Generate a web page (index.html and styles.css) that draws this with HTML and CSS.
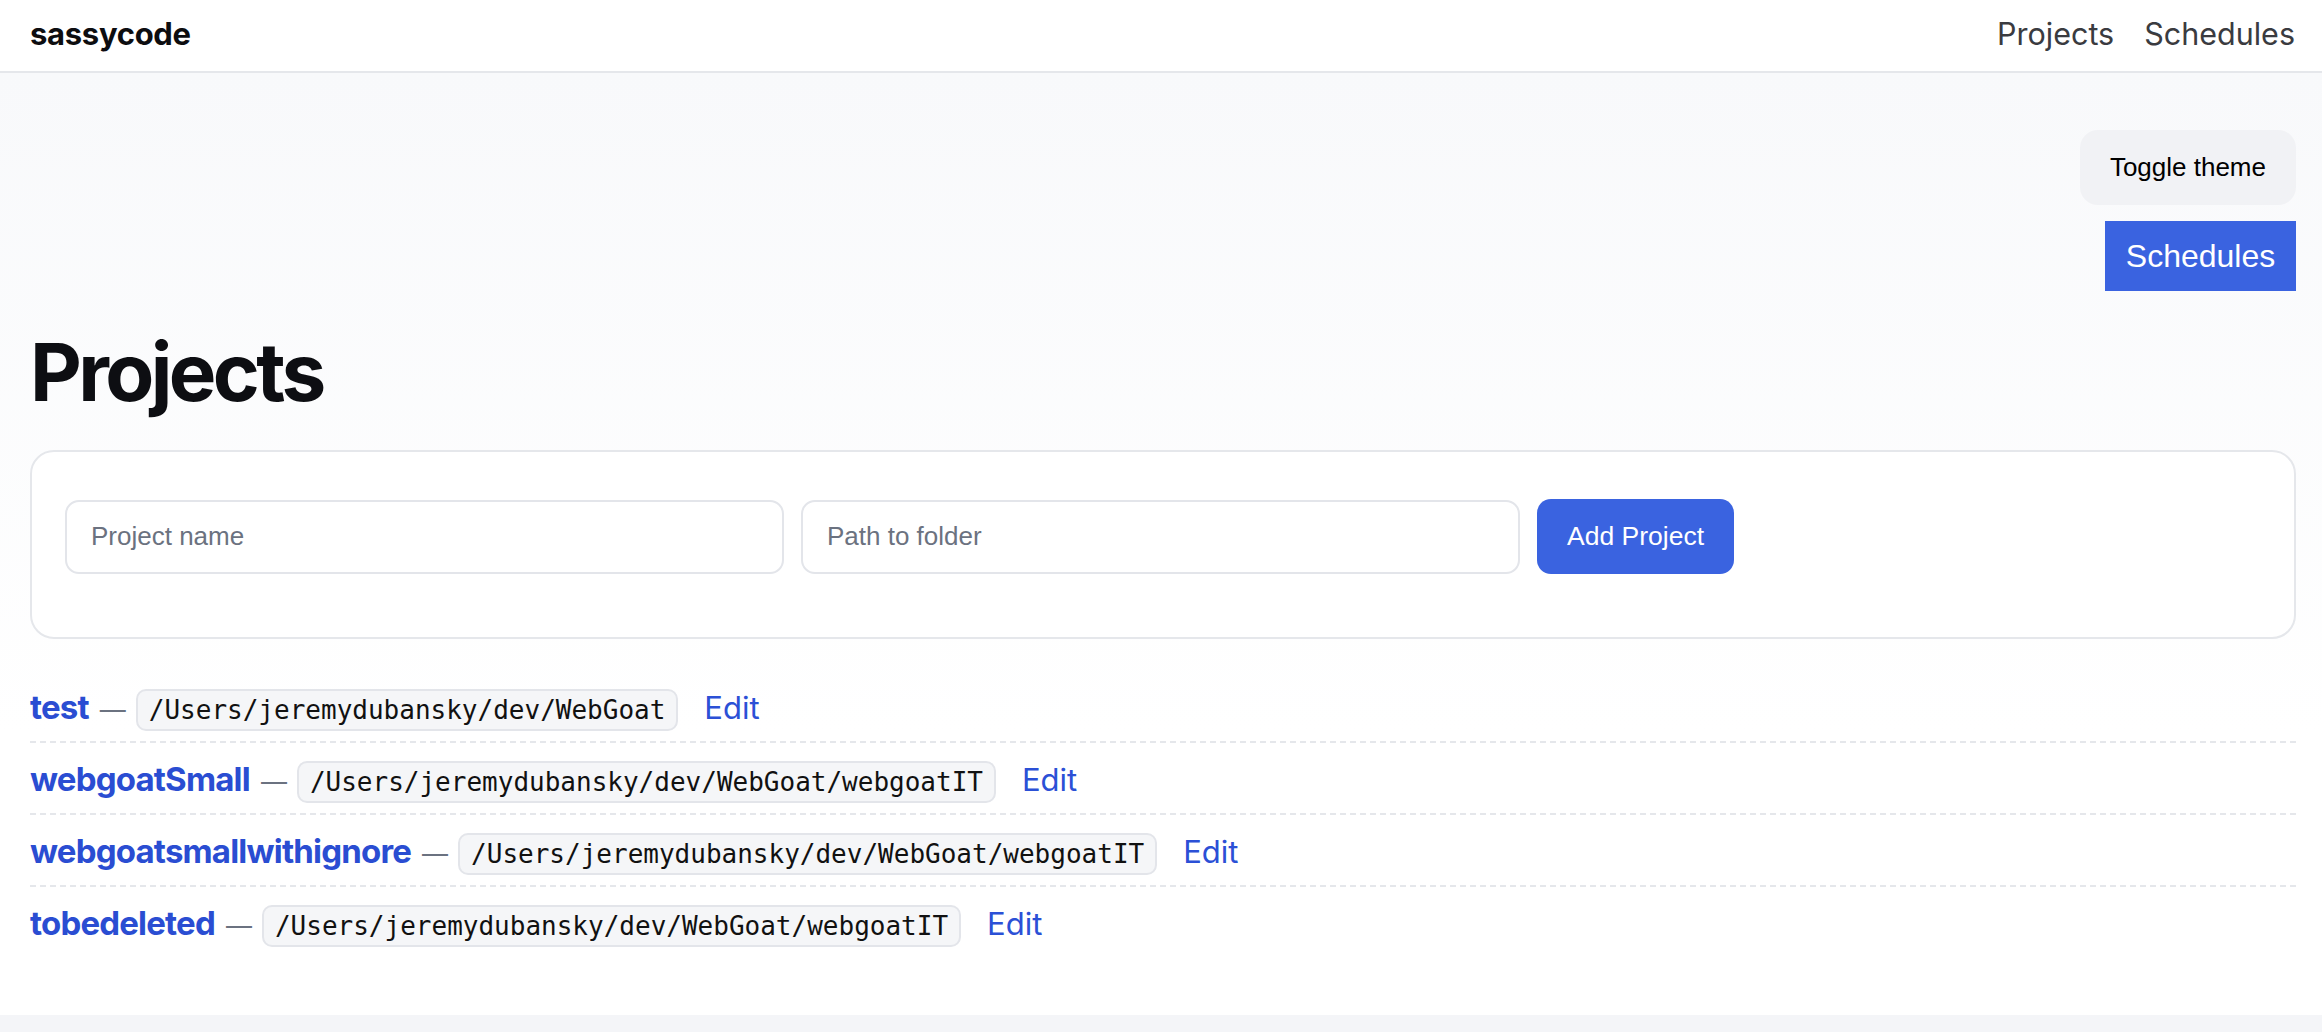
FILE: index.html
```html
<!DOCTYPE html>
<html lang="en">
<head>
<meta charset="utf-8">
<title>sassycode — Projects</title>
<link rel="stylesheet" href="styles.css">
</head>
<body>
<header class="topbar">
  <a class="brand" href="#">sassycode</a>
  <nav class="nav">
    <a href="#">Projects</a>
    <a href="#">Schedules</a>
  </nav>
</header>
<main class="main">
  <div class="toolbar">
    <button class="btn-theme" type="button">Toggle theme</button>
    <a class="btn-schedules" href="#">Schedules</a>
  </div>
  <h1 class="title">Projects</h1>
  <section class="card">
    <form class="add-form">
      <input class="field" type="text" placeholder="Project name">
      <input class="field" type="text" placeholder="Path to folder">
      <button class="btn-primary" type="button">Add Project</button>
    </form>
  </section>
  <ul class="projects">
    <li class="project"><a class="pname" href="#">test</a><span class="sep">—</span><code class="path">/Users/jeremydubansky/dev/WebGoat</code><a class="edit" href="#">Edit</a></li>
    <li class="project"><a class="pname" href="#">webgoatSmall</a><span class="sep">—</span><code class="path">/Users/jeremydubansky/dev/WebGoat/webgoatIT</code><a class="edit" href="#">Edit</a></li>
    <li class="project"><a class="pname" href="#">webgoatsmallwithignore</a><span class="sep">—</span><code class="path">/Users/jeremydubansky/dev/WebGoat/webgoatIT</code><a class="edit" href="#">Edit</a></li>
    <li class="project"><a class="pname" href="#">tobedeleted</a><span class="sep">—</span><code class="path">/Users/jeremydubansky/dev/WebGoat/webgoatIT</code><a class="edit" href="#">Edit</a></li>
  </ul>
</main>
</body>
</html>
```
FILE: styles.css
```css
* { box-sizing: border-box; }

html, body {
  margin: 0;
  padding: 0;
}

body {
  background: #f4f5f8;
  font-family: Inter, "Liberation Sans", sans-serif;
  color: #111;
}

a { text-decoration: none; }

.topbar {
  height: 73px;
  background: #fff;
  border-bottom: 2px solid #e5e7eb;
  display: flex;
  align-items: center;
  justify-content: space-between;
  padding: 0 27px 4px 30px;
}

.brand {
  font-family: Inter, sans-serif;
  font-weight: 700;
  font-size: 31px;
  color: #0d0d10;
  letter-spacing: -0.3px;
}

.nav {
  display: flex;
  gap: 30px;
}

.nav a {
  font-family: Inter, sans-serif;
  font-size: 30.5px;
  color: #3a3b40;
}

.main {
  background: linear-gradient(#f8f9fb, #ffffff 70%);
  padding: 57px 26px 58px 30px;
}

.toolbar {
  display: flex;
  flex-direction: column;
  align-items: flex-end;
  gap: 16px;
}

.btn-theme {
  height: 75px;
  padding: 0 30px;
  border: none;
  border-radius: 18px;
  background: #f1f2f5;
  color: #000;
  font-family: "Liberation Sans", Arial, sans-serif;
  font-size: 26px;
}

.btn-schedules {
  height: 70px;
  width: 191px;
  display: flex;
  align-items: center;
  justify-content: center;
  background: #3a63e0;
  color: #fff;
  font-family: "Liberation Sans", Arial, sans-serif;
  font-size: 32px;
}

.title {
  margin: 33px 0 30px;
  font-family: Inter, sans-serif;
  font-weight: 700;
  font-size: 80px;
  line-height: 96px;
  letter-spacing: -3.6px;
  color: #0d0e12;
}

.card {
  background: #fff;
  border: 2px solid #e5e7eb;
  border-radius: 24px;
  padding: 47px 33px 63px;
}

.add-form {
  display: flex;
  align-items: center;
  gap: 17px;
}

.field {
  width: 719px;
  height: 74px;
  border: 2px solid #e3e5ea;
  border-radius: 14px;
  padding: 0 24px;
  background: #fff;
  font-family: "Liberation Sans", Arial, sans-serif;
  font-size: 26px;
  color: #111;
}

.field::placeholder {
  color: #6b7280;
}

.btn-primary {
  height: 75px;
  width: 197px;
  border: none;
  border-radius: 14px;
  background: #3a63e0;
  color: #fff;
  font-family: "Liberation Sans", Arial, sans-serif;
  font-size: 26.5px;
}

.projects {
  list-style: none;
  margin: 32px 0 0;
  padding: 0;
}

.project {
  display: flex;
  align-items: baseline;
  padding: 16px 0 10px;
  border-bottom: 2px dashed #e5e7eb;
}

.project:last-child {
  border-bottom: none;
}

.pname {
  font-family: Inter, sans-serif;
  font-weight: 700;
  font-size: 33px;
  line-height: 40px;
  letter-spacing: -0.8px;
  color: #2a4dd2;
}

.sep {
  margin: 0 10px 0 11px;
  font-family: Inter, sans-serif;
  font-size: 26px;
  color: #6b7280;
}

.path {
  display: inline-block;
  padding: 4px 11px;
  border: 2px solid #e3e5ea;
  border-radius: 10px;
  background: #f5f6f8;
  font-family: "DejaVu Sans Mono", "Liberation Mono", monospace;
  font-size: 26px;
  color: #111;
}

.edit {
  margin-left: 26px;
  font-family: Inter, sans-serif;
  font-size: 31px;
  line-height: 40px;
  color: #2b50d6;
}
```
